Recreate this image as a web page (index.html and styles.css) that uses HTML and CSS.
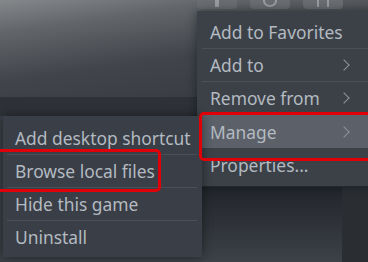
FILE: index.html
```html
<!DOCTYPE html>
<html>

<head>
    <meta charset="utf-8">
    <title>Game context menu</title>
    <link rel="stylesheet" href="styles.css">
</head>

<body>
    <div class="scene">
        <div class="hero">
            <div class="hero-buttons">
                <div class="hero-btn"><span class="glyph"></span></div>
                <div class="hero-btn"><span class="glyph glyph-round"></span></div>
                <div class="hero-btn"><span class="glyph glyph-pair"></span></div>
            </div>
        </div>
        <div class="lower">
            <div class="side-strip"></div>
            <div class="lower-main"></div>
            <div class="lower-col"></div>
        </div>

        <div class="menu menu-main">
            <div class="item">Add to Favorites</div>
            <div class="item">Add to <span class="chev"></span></div>
            <div class="item">Remove from <span class="chev"></span></div>
            <div class="item active">Manage <span class="chev"></span></div>
            <div class="item">Properties...</div>
        </div>

        <div class="menu menu-sub">
            <div class="item">Add desktop shortcut</div>
            <div class="item">Browse local files</div>
            <div class="item">Hide this game</div>
            <div class="item">Uninstall</div>
        </div>

        <div class="mark mark-manage"></div>
        <div class="mark mark-browse"></div>
    </div>
</body>

</html>
```

FILE: styles.css
```css
body {
    margin: 0;
    background: #2f3339;
    font-family: "Noto Sans", "Open Sans", sans-serif;
    overflow: hidden;
}

.scene {
    position: relative;
    width: 368px;
    height: 262px;
    overflow: hidden;
    display: flex;
    flex-direction: column;
}

.hero {
    height: 97px;
    background: linear-gradient(172deg, #85888b 0%, #62666a 22%, #41454b 55%, #363a40 100%);
}

.hero-buttons {
    display: flex;
    gap: 13px;
    padding-left: 197px;
    margin-top: -5px;
}

.hero-btn {
    width: 40px;
    height: 14px;
    border-radius: 4px;
    background: #6a6e73;
    display: flex;
    justify-content: center;
}

.glyph {
    width: 4px;
    height: 9px;
    margin-top: 3px;
    background: #9a9da1;
}

.glyph-round {
    width: 10px;
    height: 8px;
    border-radius: 50%;
    background: none;
    border: 2px solid #9a9da1;
    margin-top: 0;
}

.glyph-pair {
    width: 8px;
    background: none;
    border-left: 2px solid #9a9da1;
    border-right: 2px solid #9a9da1;
}

.lower {
    flex: 1;
    display: flex;
    background: #2e3238;
}

.side-strip {
    width: 3px;
    margin-top: 19px;
    background: #3b4047;
}

.lower-main {
    flex: 1;
    margin-top: 90px;
    background: linear-gradient(180deg, #22262b 0%, #2f3339 50%, #3d4248 100%);
}

.lower-col {
    width: 26px;
    margin-top: 90px;
    background: #2a2e33;
}

.menu {
    position: absolute;
    box-sizing: border-box;
    background: #3c4148;
    box-shadow: 0 0 10px rgba(0, 0, 0, 0.45);
    color: #b3bac1;
    font-size: 17.4px;
    display: flex;
    flex-direction: column;
}

.menu-main {
    left: 197px;
    top: 11px;
    width: 180px;
    padding: 4px 0 5px 0;
}

.menu-sub {
    left: 3px;
    top: 116px;
    width: 199px;
    padding: 5px 0 4px 0;
    background: #3a3e46;
}

.item {
    height: 33px;
    box-sizing: border-box;
    display: flex;
    align-items: center;
    justify-content: space-between;
    padding: 0 22px 0 8px;
    margin: 0 5px;
    border-top: 1px solid #4b5058;
    white-space: nowrap;
}

.item:first-child {
    border-top-color: transparent;
}

.menu-sub .item {
    margin: 0 5px 0 4px;
    padding-left: 8px;
}

.item.active {
    background: #5b6069;
    border-top-color: transparent;
    height: 34px;
}

.item.active + .item {
    border-top-color: transparent;
}

.chev {
    width: 7px;
    height: 7px;
    border-top: 1.5px solid #8d949b;
    border-right: 1.5px solid #8d949b;
    transform: rotate(45deg);
    margin-right: 2px;
}

.mark {
    position: absolute;
    border: 3px solid #e00008;
    border-radius: 5px;
}

.mark-manage {
    left: 199px;
    top: 112px;
    width: 180px;
    height: 43px;
}

.mark-browse {
    left: -10px;
    top: 149px;
    width: 165px;
    height: 37px;
}
```
